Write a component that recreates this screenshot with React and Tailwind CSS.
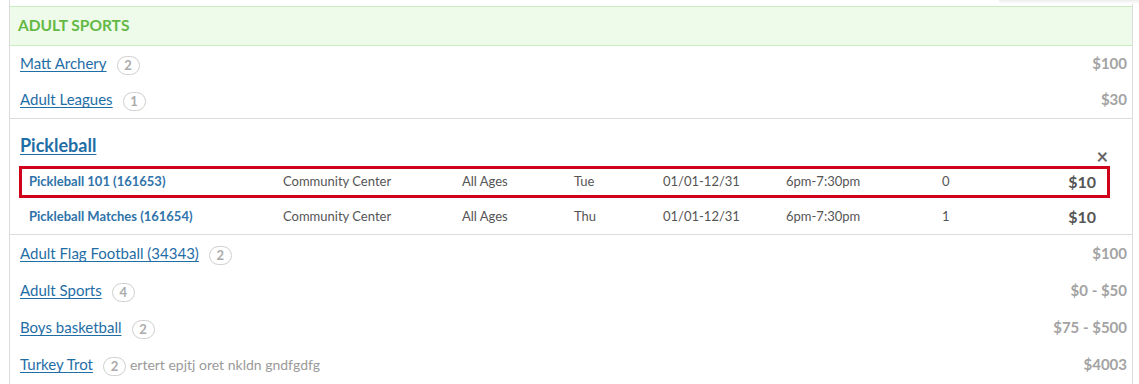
import React from "react";

// Program list: category header, simple rows, one expanded activity with its sections
const TOP_ROWS = [
  { name: "Matt Archery", count: 2, price: "$100" },
  { name: "Adult Leagues", count: 1, price: "$30" },
];

const BOTTOM_ROWS = [
  { name: "Adult Flag Football (34343)", count: 2, price: "$100" },
  { name: "Adult Sports", count: 4, price: "$0 - $50" },
  { name: "Boys basketball", count: 2, price: "$75 - $500" },
  { name: "Turkey Trot", count: 2, price: "$4003", note: "ertert epjtj oret nkldn gndfgdfg" },
];

const SECTIONS = [
  {
    name: "Pickleball 101 (161653)",
    location: "Community Center",
    ages: "All Ages",
    day: "Tue",
    dates: "01/01-12/31",
    time: "6pm-7:30pm",
    enrolled: "0",
    price: "$10",
    selected: true,
  },
  {
    name: "Pickleball Matches (161654)",
    location: "Community Center",
    ages: "All Ages",
    day: "Thu",
    dates: "01/01-12/31",
    time: "6pm-7:30pm",
    enrolled: "1",
    price: "$10",
  },
];

function Badge({ n }) {
  return (
    <span className="inline-flex h-[19px] min-w-[23px] items-center justify-center rounded-full border-[1.5px] border-[#cfcfcf] text-[13px] font-bold leading-none text-[#ababab]">
      {n}
    </span>
  );
}

function ProgramRow({ row, tall }) {
  return (
    <div
      className={`flex items-center justify-between pl-[10px] pr-[5px] ${tall ? "h-[37px]" : "h-[36px] pb-[1px]"}`}
    >
      <div className="flex items-center">
        <a href="#" className="text-[15px] text-[#1f6ea6] underline underline-offset-2">
          {row.name}
        </a>
        <span className="ml-[10px]">
          <Badge n={row.count} />
        </span>
        {row.note && <span className="ml-[4px] text-[14px] text-[#9a9a9a]">{row.note}</span>}
      </div>
      <span className="text-[15px] font-bold text-[#a3a3a3]">{row.price}</span>
    </div>
  );
}

function SectionRow({ s }) {
  return (
    <div
      className={`grid h-[32px] grid-cols-[254px_179px_112px_89px_123px_156px_1fr_auto] items-center border-[3px] pl-[7px] pr-[11px] text-[13px] text-[#555] ${
        s.selected ? "border-[#d0021b]" : "border-transparent"
      }`}
    >
      <span className="font-bold text-[#2f73aa]">{s.name}</span>
      <span>{s.location}</span>
      <span>{s.ages}</span>
      <span>{s.day}</span>
      <span>{s.dates}</span>
      <span>{s.time}</span>
      <span>{s.enrolled}</span>
      <span className="text-[16px] font-bold text-[#555]">{s.price}</span>
    </div>
  );
}

export default function App() {
  return (
    <div className="relative h-[384px] w-[1139px] overflow-hidden bg-white font-['Lato',sans-serif]">
      <div className="pointer-events-none absolute right-0 top-0 h-[4px] w-[140px] bg-gradient-to-b from-[#ededed] to-white" />
      <div className="ml-[9px] h-full w-[1124px] border-l border-r border-[#dcdcdc] pt-[6px]">
        <div className="flex h-[40px] items-center border-y border-[#c9ecc0] bg-[#effbea] px-[8px]">
          <h2 className="text-[15.5px] font-bold uppercase text-[#63b944]">Adult Sports</h2>
        </div>

        {TOP_ROWS.map((r) => (
          <ProgramRow key={r.name} row={r} />
        ))}

        <div className="border-y border-[#dcdcdc] pb-[1px] pl-[9px] pr-[22px]">
          <div className="flex h-[47px] items-end justify-between">
            <a
              href="#"
              className="mb-[10px] ml-[1px] text-[18px] font-bold leading-[22px] text-[#1f6ea6] underline underline-offset-2"
            >
              Pickleball
            </a>
            <button type="button" className="mr-[2px] text-[20px] font-bold leading-[20px] text-[#666]">
              ×
            </button>
          </div>
          <SectionRow s={SECTIONS[0]} />
          <div className="mt-[3px]">
            <SectionRow s={SECTIONS[1]} />
          </div>
        </div>

        {BOTTOM_ROWS.map((r) => (
          <ProgramRow key={r.name} row={r} tall />
        ))}
      </div>
    </div>
  );
}
